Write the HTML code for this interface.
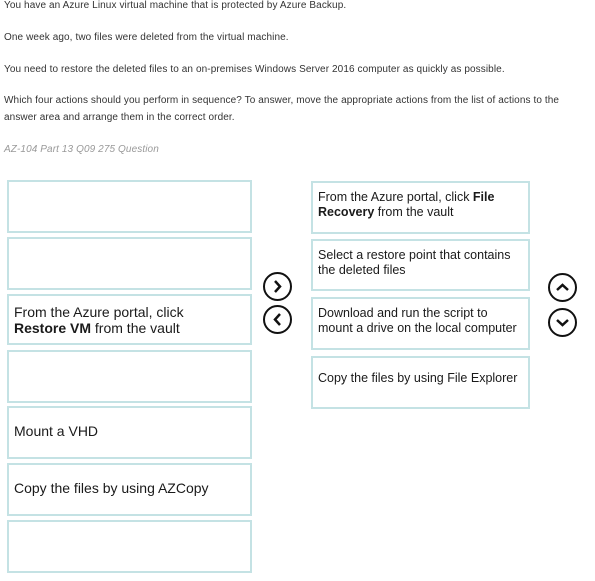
<html><head><style>
body{margin:0;width:595px;height:581px;background:#fff;position:relative;font-family:"Liberation Sans",sans-serif;overflow:hidden}
.t{position:absolute;left:4px;font-size:10px;letter-spacing:0.1px;color:#333;white-space:nowrap}
.b{position:absolute;border:2px solid #c4e2e4;box-sizing:border-box;font-size:12.5px;color:#1a1a1a;line-height:15px;padding:7px 0 0 5px}
.l{font-size:14px;line-height:16px}
.c{position:absolute;width:29px;height:29px;border:2px solid #111;border-radius:50%;box-sizing:border-box}
.c svg{position:absolute;left:4px;top:4px}
</style></head><body>
<div class="t" style="top:0px">You have an Azure Linux virtual machine that is protected by Azure Backup.</div>
<div class="t" style="top:32px">One week ago, two files were deleted from the virtual machine.</div>
<div class="t" style="top:64px">You need to restore the deleted files to an on-premises Windows Server 2016 computer as quickly as possible.</div>
<div class="t" style="top:95px">Which four actions should you perform in sequence? To answer, move the appropriate actions from the list of actions to the</div>
<div class="t" style="top:112px">answer area and arrange them in the correct order.</div>
<div class="t" style="top:144px;color:#999;font-style:italic">AZ-104 Part 13 Q09 275 Question</div>

<div class="b" style="left:7px;top:180px;width:245px;height:53px"></div>
<div class="b" style="left:7px;top:237px;width:245px;height:53px"></div>
<div class="b l" style="left:7px;top:294px;width:245px;height:51px;padding-top:8px">From the Azure portal, click<br><b>Restore VM</b> from the vault</div>
<div class="b" style="left:7px;top:350px;width:245px;height:53px"></div>
<div class="b l" style="left:7px;top:406px;width:245px;height:53px;padding-top:15px">Mount a VHD</div>
<div class="b l" style="left:7px;top:463px;width:245px;height:53px;padding-top:15px">Copy the files by using AZCopy</div>
<div class="b" style="left:7px;top:520px;width:245px;height:53px"></div>

<div class="b" style="left:311px;top:181px;width:219px;height:53px">From the Azure portal, click <b>File<br>Recovery</b> from the vault</div>
<div class="b" style="left:311px;top:239px;width:219px;height:52px">Select a restore point that contains<br>the deleted files</div>
<div class="b" style="left:311px;top:297px;width:219px;height:53px">Download and run the script to<br>mount a drive on the local computer</div>
<div class="b" style="left:311px;top:356px;width:219px;height:53px;padding-top:13px">Copy the files by using File Explorer</div>

<div class="c" style="left:263px;top:272px"><svg width="17" height="17"><path d="M6 3L11 8.5L6 14" fill="none" stroke="#111" stroke-width="2.5"/></svg></div>
<div class="c" style="left:263px;top:305px"><svg width="17" height="17"><path d="M11 3L6 8.5L11 14" fill="none" stroke="#111" stroke-width="2.5"/></svg></div>
<div class="c" style="left:548px;top:273px"><svg width="17" height="17"><path d="M3 11L8.5 6L14 11" fill="none" stroke="#111" stroke-width="2.5"/></svg></div>
<div class="c" style="left:548px;top:308px"><svg width="17" height="17"><path d="M3 6L8.5 11L14 6" fill="none" stroke="#111" stroke-width="2.5"/></svg></div>
</body></html>
